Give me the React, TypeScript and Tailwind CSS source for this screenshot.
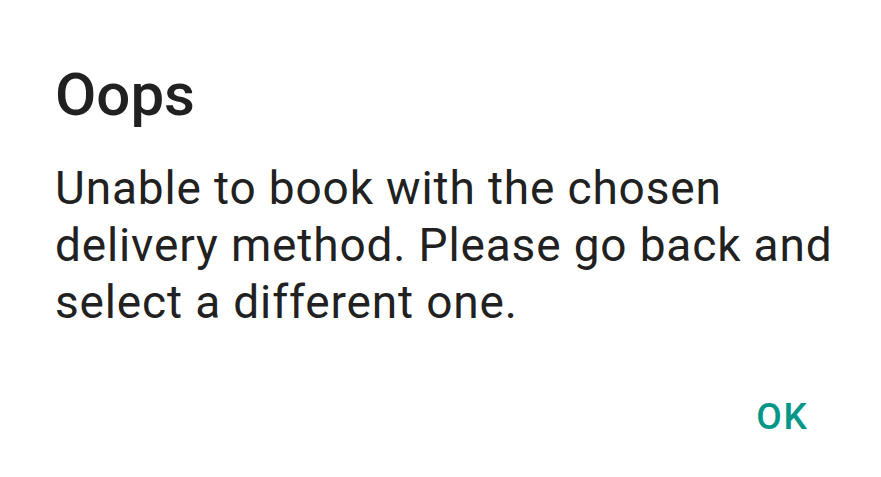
import React from "react";

export default function App() {
  return (
    <div className="w-[881px] h-[477px] bg-white flex flex-col font-['Roboto',sans-serif] text-[#212121]">
      <div className="pl-[55px] pr-[30px] pt-[60px]">
        <h1 className="text-[60px] leading-[70px] font-medium">Oops</h1>
        <p className="mt-[30px] text-[46px] leading-[57px] tracking-[0.85px]">
          Unable to book with the chosen delivery method. Please go back and select a different one.
        </p>
      </div>
      <div className="flex justify-end pr-[72px] mt-[64px]">
        <button className="text-[37px] leading-[44px] font-medium tracking-[2px] text-[#009688]">OK</button>
      </div>
    </div>
  );
}
